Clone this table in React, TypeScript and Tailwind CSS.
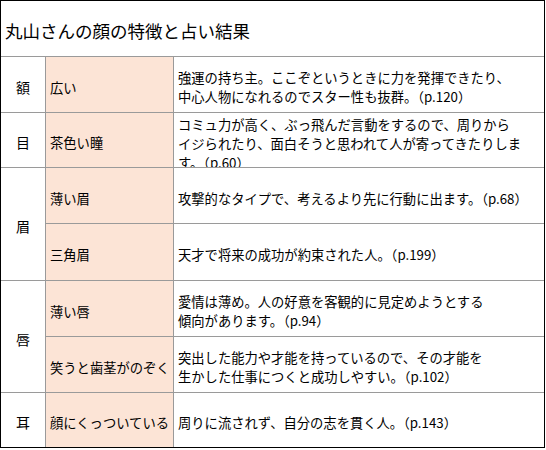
import React from "react";

const font = {
  fontFamily: '"Noto Sans CJK JP", "Noto Sans", sans-serif',
};

const cellBase = "border-[#9a9a9a] overflow-hidden";

export default function App() {
  return (
    <div className="w-[546px] h-[450px] bg-white text-black" style={font}>
      <div className="w-[545px] h-[448px] border border-black grid grid-cols-[45px_128px_370px] grid-rows-[56px_56px_55px_56px_57px_56px_56px_54px] text-[13.3px] leading-[19px]">
        {/* title */}
        <div className={`${cellBase} col-span-3 border-b flex items-center px-1 pt-[3px] text-[17.5px]`}>
          丸山さんの顔の特徴と占い結果
        </div>

        {/* 額 */}
        <div className={`${cellBase} border-r border-b flex items-center justify-center pt-[5px] text-[14px]`}>額</div>
        <div className={`${cellBase} border-r border-b bg-[#fce4d6] flex items-center px-1 pt-[5px]`}>広い</div>
        <div className={`${cellBase} border-b flex items-center px-1 pt-[5px] whitespace-nowrap`}>
          <p>
            強運の持ち主。ここぞというときに力を発揮できたり、
            <br />
            中心人物になれるのでスター性も抜群。（p.120）
          </p>
        </div>

        {/* 目 */}
        <div className={`${cellBase} border-r border-b flex items-center justify-center pt-[5px] text-[14px]`}>目</div>
        <div className={`${cellBase} border-r border-b bg-[#fce4d6] flex items-center px-1 pt-[5px]`}>茶色い瞳</div>
        <div className={`${cellBase} border-b px-1 pt-[2px] whitespace-nowrap`}>
          <p>
            コミュ力が高く、ぶっ飛んだ言動をするので、周りから
            <br />
            イジられたり、面白そうと思われて人が寄ってきたりしま
            <br />
            す。（p.60）
          </p>
        </div>

        {/* 眉 */}
        <div className={`${cellBase} row-span-2 border-r border-b flex items-center justify-center pt-[5px] text-[14px]`}>眉</div>
        <div className={`${cellBase} border-r border-b bg-[#fce4d6] flex items-center px-1 pt-[5px]`}>薄い眉</div>
        <div className={`${cellBase} border-b flex items-center px-1 pt-[5px] whitespace-nowrap`}>
          攻撃的なタイプで、考えるより先に行動に出ます。（p.68）
        </div>
        <div className={`${cellBase} border-r border-b bg-[#fce4d6] flex items-center px-1 pt-[5px]`}>三角眉</div>
        <div className={`${cellBase} border-b flex items-center px-1 pt-[5px] whitespace-nowrap`}>
          天才で将来の成功が約束された人。（p.199）
        </div>

        {/* 唇 */}
        <div className={`${cellBase} row-span-2 border-r border-b flex items-center justify-center pt-[5px] text-[14px]`}>唇</div>
        <div className={`${cellBase} border-r border-b bg-[#fce4d6] flex items-center px-1 pt-[5px]`}>薄い唇</div>
        <div className={`${cellBase} border-b flex items-center px-1 pt-[5px] whitespace-nowrap`}>
          <p>
            愛情は薄め。人の好意を客観的に見定めようとする
            <br />
            傾向があります。（p.94）
          </p>
        </div>
        <div className={`${cellBase} border-r border-b bg-[#fce4d6] flex items-center px-1 pt-[5px] whitespace-nowrap`}>
          笑うと歯茎がのぞく
        </div>
        <div className={`${cellBase} border-b flex items-center px-1 pt-[5px] whitespace-nowrap`}>
          <p>
            突出した能力や才能を持っているので、その才能を
            <br />
            生かした仕事につくと成功しやすい。（p.102）
          </p>
        </div>

        {/* 耳 */}
        <div className={`${cellBase} border-r flex items-center justify-center pt-[5px] text-[14px]`}>耳</div>
        <div className={`${cellBase} border-r bg-[#fce4d6] flex items-center px-1 pt-[5px] whitespace-nowrap`}>
          顔にくっついている
        </div>
        <div className={`${cellBase} flex items-center px-1 pt-[5px] whitespace-nowrap`}>
          周りに流されず、自分の志を貫く人。（p.143）
        </div>
      </div>
    </div>
  );
}
